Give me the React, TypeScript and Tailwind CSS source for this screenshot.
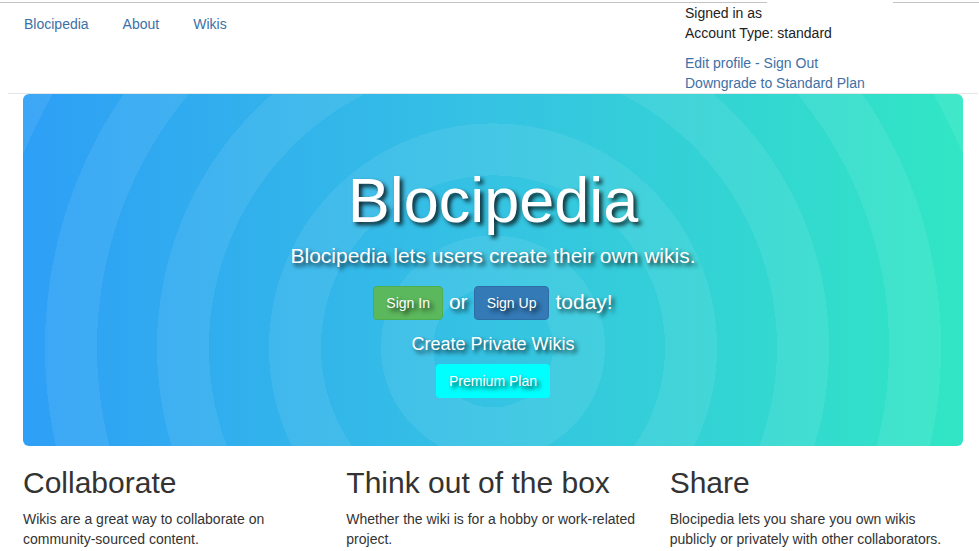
import React from "react";

const shadow = "[text-shadow:3px_3px_4px_rgba(0,0,0,0.8)]";

function Navbar() {
  return (
    <div className="h-[91px] border-b border-[#e7e7e7] flex flex-row justify-between">
      <div className="flex flex-row gap-[34px] pl-[16px] pt-[11px] text-[14px] leading-[20px] text-[#3d70a6]">
        <a>Blocipedia</a>
        <a>About</a>
        <a>Wikis</a>
      </div>
      <div className="w-[293px] text-[14px] leading-[20px] text-[#222]">
        <p>Signed in as</p>
        <p>Account Type: standard</p>
        <p className="mt-[10px] text-[#3d70a6]">Edit profile - Sign Out</p>
        <p className="text-[#3d70a6]">Downgrade to Standard Plan</p>
      </div>
    </div>
  );
}

function Feature({ title, text }: { title: string; text: string }) {
  return (
    <div className="px-[15px]">
      <h2 className="mt-[20px] mb-[10px] text-[30px] leading-[33px] text-[#333]">{title}</h2>
      <p className="text-[14px] leading-[20px] text-[#333]">{text}</p>
    </div>
  );
}

export default function App() {
  return (
    <div className="bg-white min-h-[551px] font-['Liberation_Sans',Arial,sans-serif] overflow-hidden">
      <div className="flex flex-row h-[1px] mt-[2px]">
        <div className="w-[767px] bg-[#c4c4c4]" />
        <div className="w-[126px]" />
        <div className="flex-1 bg-[#c4c4c4]" />
      </div>
      <div className="ml-[8px] w-[970px]">
        <Navbar />
        <div className="mx-[15px] h-[352px] rounded-[6px] flex flex-col items-center text-white bg-[image:repeating-radial-gradient(circle_at_50%_72%,rgba(255,255,255,0)_0_60px,rgba(255,255,255,0.075)_60px_112px),linear-gradient(to_right,#2e9ff6,#35c3e3_50%,#31e6c4)]">
          <h1 className={`mt-[72px] text-[63px] leading-[69px] ${shadow}`}>Blocipedia</h1>
          <p className={`mt-[6px] text-[21px] leading-[30px] ${shadow}`}>
            Blocipedia lets users create their own wikis.
          </p>
          <div className="mt-[15px] flex flex-row items-center gap-[6px] text-[21px]">
            <span className={`h-[34px] px-[12px] flex items-center rounded-[4px] bg-[#5cb85c] border border-[#4cae4c] text-[14px] ${shadow}`}>
              Sign In
            </span>
            <span className={`-mt-[3px] ${shadow}`}>or</span>
            <span className={`h-[34px] px-[12px] flex items-center rounded-[4px] bg-[#337ab7] border border-[#2e6da4] text-[14px] ${shadow}`}>
              Sign Up
            </span>
            <span className={`-mt-[3px] ${shadow}`}>today!</span>
          </div>
          <p className={`mt-[11px] text-[18px] leading-[26px] ${shadow}`}>Create Private Wikis</p>
          <span className={`mt-[7px] h-[34px] px-[13px] flex items-center rounded-[4px] bg-[#00ffff] text-[14px] ${shadow}`}>
            Premium Plan
          </span>
        </div>
        <div className="grid grid-cols-3">
          <Feature title="Collaborate" text="Wikis are a great way to collaborate on community-sourced content." />
          <Feature title="Think out of the box" text="Whether the wiki is for a hobby or work-related project." />
          <Feature title="Share" text="Blocipedia lets you share you own wikis publicly or privately with other collaborators." />
        </div>
      </div>
    </div>
  );
}
